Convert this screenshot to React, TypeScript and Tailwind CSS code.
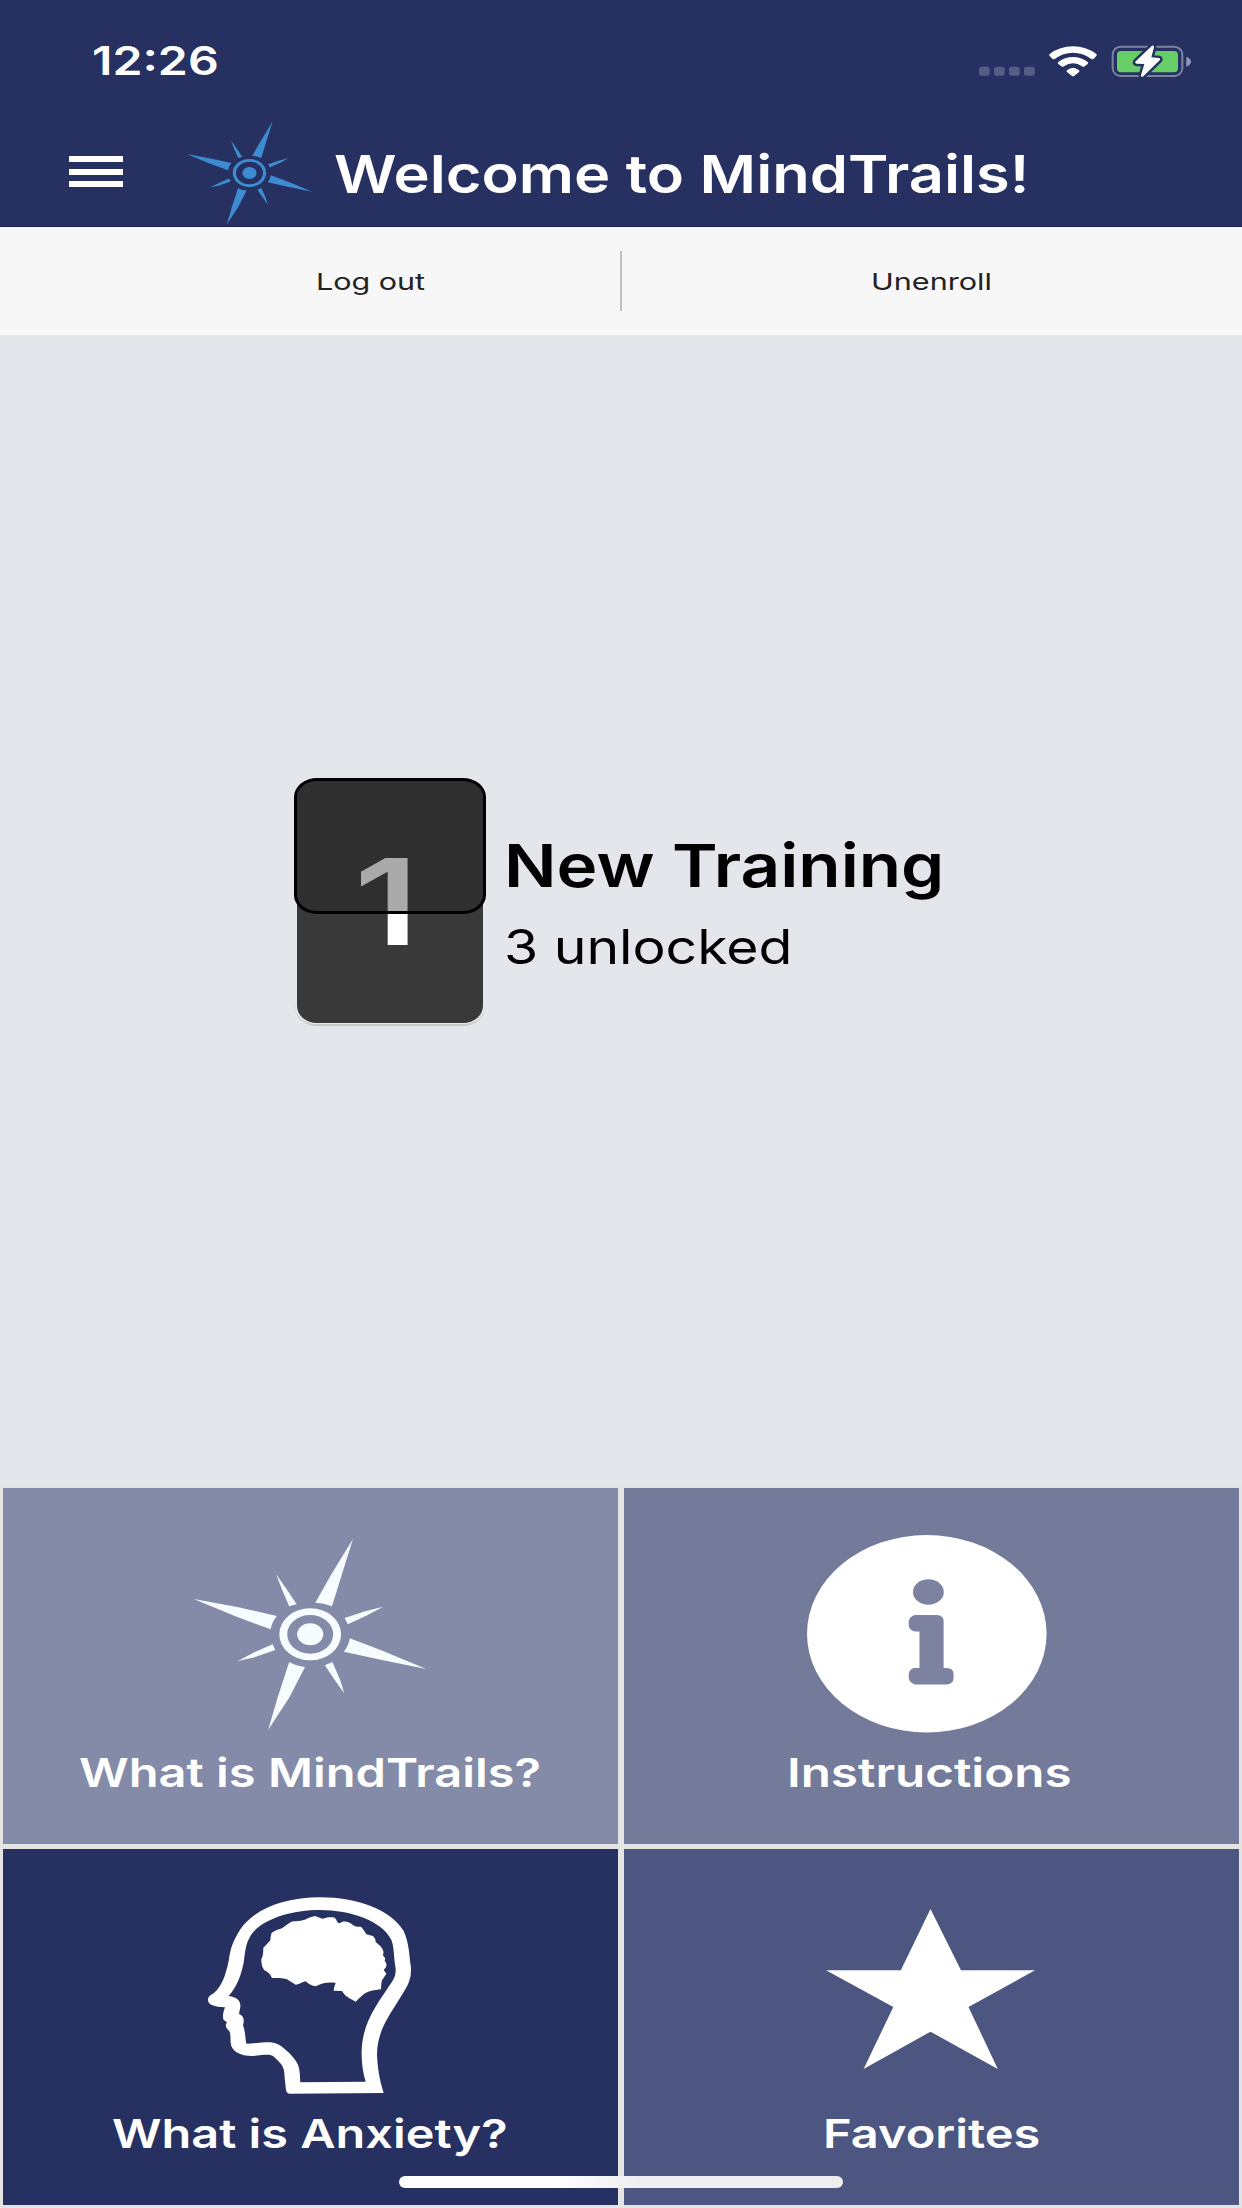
import { useLayoutEffect, useRef, useState } from "react";
import type { ReactNode } from "react";

/* Text stretched horizontally to fill exactly `width` pixels. */
function WideText({ width, className = "", children }: { width: number; className?: string; children: string }) {
  const ref = useRef<HTMLSpanElement>(null);
  const [scale, setScale] = useState(1.2);
  useLayoutEffect(() => {
    if (ref.current) setScale(width / ref.current.offsetWidth);
  }, [width, children]);
  return (
    <div className={`flex shrink-0 justify-start ${className}`} style={{ width }}>
      <span ref={ref} className="shrink-0 origin-left whitespace-nowrap" style={{ transform: `scaleX(${scale})` }}>
        {children}
      </span>
    </div>
  );
}

function Compass({ className, ring }: { className: string; ring: number }) {
  return (
    <svg viewBox="480 200 600 590" preserveAspectRatio="none" className={className} fill="currentColor">
      <circle cx="781" cy="495" r="33" />
      <circle cx="781" cy="495" r={78 - ring / 2} fill="none" stroke="currentColor" strokeWidth={ring} />
      <path d="M889 209L862 312L836 411Q815 400 794 400L833 318Z" />
      <path d="M695 315L719 355L747 405L728 411L709 358Z" />
      <path d="M487 389L600 414L697 440Q685 456 681 480L592 441Z" />
      <path d="M597 576L640 549L686 525L693 542L640 564Z" />
      <path d="M675 781L699 684L728 578Q745 590 768 593L728 685Z" />
      <path d="M867 672L856 630L837 578L818 588L843 632Z" />
      <path d="M1074 599L965 573L866 547Q878 530 881 507L965 545Z" />
      <path d="M965 412L920 426L868 446L876 465L925 438Z" />
    </svg>
  );
}

function StatusIcons() {
  return (
    <svg viewBox="55 40 645 105" className="h-[35px] w-[215px]">
      <g fill="#565e87">
        <rect x="58" y="108" width="32" height="27" rx="8" />
        <rect x="103" y="108" width="32" height="27" rx="8" />
        <rect x="148" y="108" width="32" height="27" rx="8" />
        <rect x="193" y="108" width="32" height="27" rx="8" />
      </g>
      <g fill="#fff">
        <path d="M270 70Q301 47 340 47T410 70Q413 73 410 76L402 84Q398 87 394 84Q370 66 340 66T286 84Q282 87 278 84L270 76Q267 73 270 70Z" />
        <path d="M296 94Q316 79 340 79T384 94Q387 97 384 100L375 107Q371 110 367 107Q354 98 340 98T313 107Q309 110 305 107L296 100Q293 97 296 94Z" />
        <path d="M322 119Q331 111 340 111T358 119Q361 122 358 124L343 136Q340 138 337 136L322 124Q319 122 322 119Z" />
      </g>
      <rect x="459" y="48" width="209" height="88" rx="24" fill="none" stroke="#7c83a2" strokeWidth="6" />
      <path d="M680 78Q694 84 694 93T680 108Z" fill="#9297b1" />
      <rect x="472" y="61" width="183" height="64" rx="12" fill="#67ce67" />
      <path
        d="M577 45L528 92Q524 98 531 99L554 100L544 134Q544 142 551 137L600 89Q604 83 597 82L575 80L583 50Q583 43 577 45Z"
        fill="#fff"
        stroke="#263162"
        strokeWidth="15"
        strokeLinejoin="round"
        paintOrder="stroke"
      />
    </svg>
  );
}

function InfoIcon() {
  return (
    <svg viewBox="470 195 605 592" preserveAspectRatio="none" className="h-[197.5px] w-[239.6px]">
      <ellipse cx="772.5" cy="491" rx="302.5" ry="296" fill="#fff" />
      <g fill="#7c82a0">
        <ellipse cx="776.5" cy="366" rx="39" ry="38" />
        <path d="M742 435H800Q815 438 815 453V594H825Q840 597 840 610V625Q840 639 824 643H743Q730 639 727 626V611Q729 597 740 594H754V484H743Q729 481 727 467V453Q729 440 742 435Z" />
      </g>
    </svg>
  );
}

function HeadIcon() {
  return (
    <svg viewBox="50 45 615 595" preserveAspectRatio="none" className="h-[198.3px] w-[205px]" fill="#fff">
      <path
        fillRule="evenodd"
        d="M296 638L580 636C572 610 562 575 560 520C561 440 605 395 645 325C660 298 662 285 662 260C656 225 658 190 640 150C600 85 500 49 390 49C280 49 190 85 150 145C125 185 120 205 115 240C105 285 95 315 70 337C55 345 53 350 53 358C54 372 72 378 104 379C98 395 96 408 100 417L110 424C104 432 106 440 114 447C122 455 120 465 121 485C122 510 150 525 185 525C215 523 235 518 248 525C275 550 282 555 283 590L287 628Q290 638 296 638ZM330 604L526 602C518 575 513 545 514 510C516 440 545 390 590 325C612 292 616 290 616 262C610 230 612 195 602 175C575 120 480 87 390 87C300 87 215 115 182 162C165 190 165 210 160 245C150 290 140 315 115 345C140 348 152 360 150 378L146 399C162 405 162 420 158 433C166 455 164 470 168 488C190 488 210 484 240 484C265 486 280 500 300 520C328 550 328 560 330 604Z"
      />
      <path d="M374 105L392 112C400 116 406 106 424 109Q434 108 438 116Q441 128 450 126C462 117 478 124 487 131Q494 138 512 137Q520 145 528 160L548 165Q556 172 556 183Q570 193 577 205Q582 213 578 224Q587 230 583 240Q592 249 586 260L580 266L588 278Q580 290 575 298Q572 308 572 325C550 328 535 330 522 338Q505 352 496 362C480 352 465 348 455 330L430 329Q431 318 436 306C415 303 400 305 376 316Q360 314 346 301C330 305 330 310 316 311Q302 303 290 295C275 290 265 293 245 291Q238 275 222 268Q212 255 213 235Q219 225 219 200Q230 190 240 178Q240 165 244 155Q258 146 275 142Q290 130 303 122C325 120 340 120 352 112Q363 108 374 105Z" />
    </svg>
  );
}

function StarIcon() {
  return (
    <svg viewBox="516 207 528 480" preserveAspectRatio="none" className="h-[160px] w-[209px]" fill="#fff">
      <path d="M780 207L857 391H1044L876 501L950 687L780 575L611 687L686 501L516 391H705Z" />
    </svg>
  );
}

function Tile({
  color,
  iconBox,
  icon,
  label,
  width,
  shift,
}: {
  color: string;
  iconBox: string;
  icon: ReactNode;
  label: string;
  width: number;
  shift: string;
}) {
  return (
    <button className={`flex h-[356px] flex-col items-start ${color}`}>
      <div className={`h-[260px] ${iconBox}`}>{icon}</div>
      <WideText width={width} className={`h-12 text-[40px] leading-[49px] font-semibold text-white ${shift}`}>
        {label}
      </WideText>
    </button>
  );
}

export default function App() {
  return (
    <div className="relative flex h-[2208px] w-[1242px] flex-col overflow-hidden bg-[#e5e6eb] font-['Inter',sans-serif]">
      <header className="flex h-[227px] flex-col border-b border-[#1b2350] bg-[#263162] text-white">
        <div className="flex h-[122px] items-center justify-between pr-[48.7px] pl-[92px]">
          <WideText width={127} className="text-[39.5px] leading-[48px] font-semibold">
            12:26
          </WideText>
          <StatusIcons />
        </div>
        <div className="flex h-[104px] items-start pl-[69px]">
          <button className="mt-[34px] flex w-[54px] flex-col gap-[6.5px]" aria-label="Menu">
            <span className="h-[6px] bg-white" />
            <span className="h-[6px] bg-white" />
            <span className="h-[6px] bg-white" />
          </button>
          <Compass ring={15} className="-mt-[2px] ml-[62px] h-[106px] w-[128.5px] shrink-0 text-[#3d8bd0]" />
          <WideText width={696} className="mt-[19.5px] ml-[20px] text-[52.7px] leading-[64px] font-semibold">
            Welcome to MindTrails!
          </WideText>
        </div>
      </header>

      <nav className="grid h-[108px] grid-cols-[620px_2px_620px] items-center bg-[#f7f7f7] text-[23.5px] leading-8 text-[#222]">
        <div className="flex justify-center pt-px pl-[120px]">
          <WideText width={109}>Log out</WideText>
        </div>
        <div className="h-[60px] bg-[#c0c0c2]" />
        <div className="flex justify-center pt-px pr-[2px]">
          <WideText width={121}>Unenroll</WideText>
        </div>
      </nav>

      <main className="flex h-[1150px] items-start pt-[443px] pl-[294px] text-black">
        <div className="relative h-[247px] w-[192px] shrink-0">
          <div className="absolute inset-x-0 -bottom-px h-[40px] rounded-b-[22px] border-b-2 border-[#c9c9c5]" />
          <div className="absolute inset-x-[3px] top-[2px] bottom-[2px] flex items-start rounded-[20px/17px] bg-[#393939]">
            <WideText width={65} className="mt-[62px] ml-[57px] text-[120px] leading-[120px] font-semibold text-white">
              1
            </WideText>
          </div>
          <div className="absolute inset-x-0 top-0 h-[136px] rounded-[23px/19px] border-[3px] border-black bg-[#1f1f1f]/38" />
        </div>
        <div className="pt-[51px] pl-[17.5px]">
          <WideText width={440} className="text-[59.6px] leading-[72px] font-semibold">
            New Training
          </WideText>
          <WideText width={288} className="mt-[17.5px] text-[48px] leading-[56px]">
            3 unlocked
          </WideText>
        </div>
      </main>

      <section className="grid h-[723px] grid-cols-2 gap-x-[6px] gap-y-[5px] bg-[#e4e4e4] p-[3px]">
        <Tile
          color="bg-[#848ba8]"
          iconBox="pt-[48px] pl-[187.5px]"
          icon={<Compass ring={20} className="h-[196.7px] w-[237.6px] text-[#f7fcff]" />}
          label="What is MindTrails?"
          width={462}
          shift="ml-[76px]"
        />
        <Tile
          color="bg-[#737a9a]"
          iconBox="pt-[47px] pl-[183px]"
          icon={<InfoIcon />}
          label="Instructions"
          width={285}
          shift="ml-[163px]"
        />
        <Tile
          color="bg-[#263162]"
          iconBox="pt-[46.5px] pl-[203.7px]"
          icon={<HeadIcon />}
          label="What is Anxiety?"
          width={396}
          shift="ml-[109px]"
        />
        <Tile
          color="bg-[#4c5680]"
          iconBox="pt-[60px] pl-[201.5px]"
          icon={<StarIcon />}
          label="Favorites"
          width={217}
          shift="ml-[198.5px]"
        />
      </section>

      <div className="absolute top-[2176px] left-[399px] h-[12px] w-[444px] rounded-full bg-linear-to-r from-white from-35% to-[#eeeeee] to-55%" />
    </div>
  );
}
